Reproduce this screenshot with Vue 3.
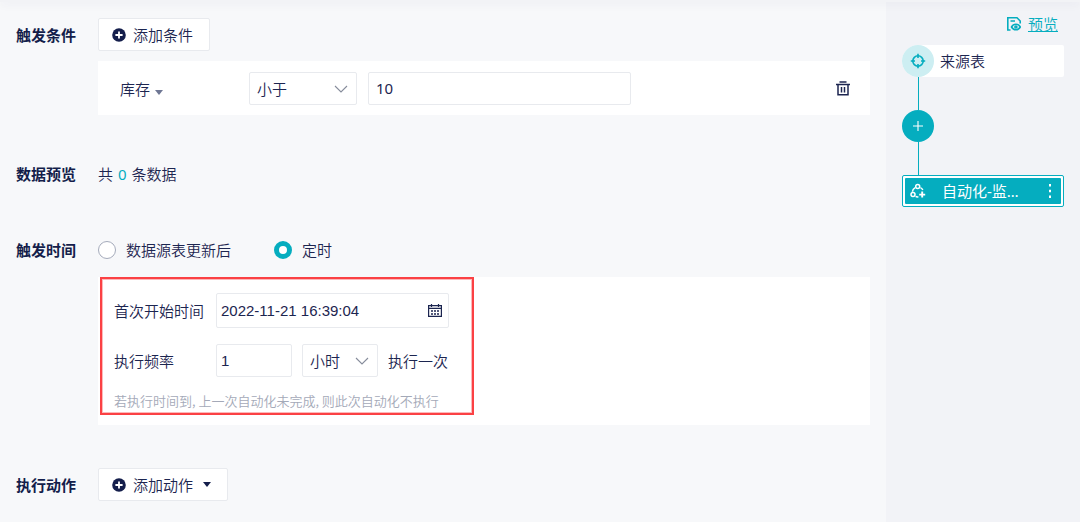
<script setup>
import { ref } from 'vue'

const operator = ref('小于')
const threshold = ref('10')
const trigger = ref('timer')
const startTime = ref('2022-11-21 16:39:04')
const interval = ref('1')
const unit = ref('小时')
</script>

<template>
  <div class="page">
    <div class="top-edge"></div>
    <main class="settings">
      <section class="row conditions">
        <h2 class="title">触发条件</h2>
        <button type="button" class="add">
          <svg width="14" height="14" viewBox="0 0 14 14" aria-hidden="true">
            <circle cx="7" cy="7" r="6.8" fill="#141e4b" />
            <path d="M7 3.4v7.2M3.4 7h7.2" stroke="#fff" stroke-width="1.8" />
          </svg>
          <span>添加条件</span>
        </button>
        <div class="panel filter">
          <button type="button" class="field">
            <span>库存</span>
            <svg width="8" height="5" viewBox="0 0 8 5" aria-hidden="true"><path d="M0 0h8L4 5z" fill="#6f7794" /></svg>
          </button>
          <div class="select operator">
            <select v-model="operator" aria-label="比较方式">
              <option>小于</option>
              <option>大于</option>
            </select>
            <svg width="14" height="8" viewBox="0 0 14 8" aria-hidden="true"><path d="M1 1l6 6 6-6" fill="none" stroke="#868c9b" stroke-width="1.1" /></svg>
          </div>
          <input v-model="threshold" class="box threshold" type="text" aria-label="数值" />
          <button type="button" class="delete" aria-label="删除">
            <svg width="14" height="15" viewBox="0 0 14 15" fill="none" stroke="#1c2550" stroke-width="1.5" aria-hidden="true">
              <path d="M3.5 1h7M0 3.5h14M2 3.5v10.2h10V3.5M5.5 6v5.5M8.5 6v5.5" />
            </svg>
          </button>
        </div>
      </section>

      <section class="row preview">
        <h2 class="title">数据预览</h2>
        <p class="count">共 <span class="accent">0</span> 条数据</p>
      </section>

      <section class="row schedule">
        <h2 class="title">触发时间</h2>
        <div class="radios">
          <label><input v-model="trigger" type="radio" name="trigger" value="update" /><span>数据源表更新后</span></label>
          <label><input v-model="trigger" type="radio" name="trigger" value="timer" /><span>定时</span></label>
        </div>
        <div class="panel timing">
          <div class="highlight">
            <div class="line">
              <label class="name" for="start">首次开始时间</label>
              <div class="date">
                <input id="start" v-model="startTime" class="box" type="text" />
                <svg width="14" height="13" viewBox="0 0 14 13" aria-hidden="true">
                  <path d="M.6 1.6h12.8v10.8H.6zM.6 4.4h12.8M3.5 0v3M10.5 0v3" fill="none" stroke="#1c2550" stroke-width="1.2" />
                  <path d="M3 7h8M3 10h8" stroke="#1c2550" stroke-width="1.5" stroke-dasharray="2 1" />
                </svg>
              </div>
            </div>
            <div class="line">
              <label class="name" for="interval">执行频率</label>
              <input id="interval" v-model="interval" class="box interval" type="text" />
              <div class="select unit">
                <select v-model="unit" aria-label="时间单位">
                  <option>小时</option>
                  <option>天</option>
                </select>
                <svg width="14" height="8" viewBox="0 0 14 8" aria-hidden="true"><path d="M1 1l6 6 6-6" fill="none" stroke="#868c9b" stroke-width="1.1" /></svg>
              </div>
              <span class="once">执行一次</span>
            </div>
            <p class="hint">若执行时间到, 上一次自动化未完成, 则此次自动化不执行</p>
          </div>
        </div>
      </section>

      <section class="row actions">
        <h2 class="title">执行动作</h2>
        <button type="button" class="add">
          <svg width="14" height="14" viewBox="0 0 14 14" aria-hidden="true">
            <circle cx="7" cy="7" r="6.8" fill="#141e4b" />
            <path d="M7 3.4v7.2M3.4 7h7.2" stroke="#fff" stroke-width="1.8" />
          </svg>
          <span>添加动作</span>
          <svg class="caret" width="8" height="5" viewBox="0 0 8 5" aria-hidden="true"><path d="M0 0h8L4 5z" fill="#141e4b" /></svg>
        </button>
      </section>
    </main>

    <aside class="flow">
      <a href="#preview" class="preview-link">
        <svg width="14" height="14" viewBox="0 0 14 14" fill="none" stroke="#05adbf" stroke-width="1.6" aria-hidden="true">
          <path d="M3.5 13H.8V.8H10L13.2 4v2.5M3.5 4H8" />
          <path d="M4.5 10C6.5 6.4 11.3 6.4 13.3 10C11.3 13.6 6.5 13.6 4.5 10z" />
          <circle cx="8.9" cy="10" r="1" />
        </svg>
        <span>预览</span>
      </a>
      <div class="source">
        <span class="node">
          <svg width="16" height="16" viewBox="0 0 16 16" fill="none" stroke="#05adbf" stroke-width="1.6" aria-hidden="true">
            <circle cx="8" cy="8" r="5.2" />
            <path d="M8 .8v4.2M8 11v4.2M.8 8h4.2M11 8h4.2" />
          </svg>
        </span>
        <span>来源表</span>
      </div>
      <div class="wire"></div>
      <button type="button" class="plus" aria-label="添加节点">
        <svg width="10" height="10" viewBox="0 0 10 10" aria-hidden="true"><path d="M5 0v10M0 5h10" stroke="#fff" stroke-width="1.1" /></svg>
      </button>
      <div class="wire"></div>
      <div class="automation">
        <div class="automation-body">
          <svg width="16" height="16" viewBox="0 0 16 16" fill="none" stroke="#fff" stroke-width="1.5" aria-hidden="true">
            <circle cx="7.7" cy="3.6" r="2" />
            <circle cx="3" cy="11.6" r="2" />
            <path d="M5.2 4.6Q2.6 6 2.4 8.8M10.4 4.6Q12.2 5.4 12.8 7M5.6 13.4Q6.8 14.2 8.4 13.8" />
            <path d="M12.2 8.6v6M9.2 11.6h6" stroke-width="1.9" />
          </svg>
          <span class="name">自动化-监…</span>
          <button type="button" class="more" aria-label="更多">
            <svg width="4" height="14" viewBox="0 0 4 14" fill="#fff" aria-hidden="true">
              <path d="M1 0h2v2.4H1zM1 5.8h2v2.4H1zM1 11.6h2V14H1z" />
            </svg>
          </button>
        </div>
      </div>
    </aside>
  </div>
</template>

<style>
body {
  margin: 0;
  background: #f7f8fa;
}
</style>

<style scoped>
* {
  box-sizing: border-box;
}
.page {
  position: relative;
  display: flex;
  min-height: 100vh;
  background: #f7f8fa;
  color: #1c2550;
  font: 350 15px/22px "Noto Sans CJK SC", sans-serif;
}
.top-edge {
  position: absolute;
  top: 0;
  left: 0;
  right: 0;
  height: 2px;
  background: #f2f3f6;
  box-shadow: 0 1px 10px rgba(20, 30, 75, 0.12);
}
.settings {
  flex: 1;
  min-width: 0;
  padding: 18px 16px;
}
.row {
  display: grid;
  grid-template-columns: 82px minmax(0, 1fr);
  align-items: center;
  justify-items: start;
}
.title {
  margin: 0;
  color: #141e4b;
  font-size: 15px;
  font-weight: 700;
}
button {
  margin: 0;
  padding: 0;
  border: 0;
  background: none;
  color: inherit;
  font: inherit;
  cursor: pointer;
}
svg {
  display: block;
  flex: none;
}
p {
  margin: 0;
}
.add {
  display: flex;
  align-items: center;
  gap: 7px;
  height: 33px;
  padding: 0 16px 0 13px;
  border: 1px solid #e8eaee;
  border-radius: 2px;
  background: #fff;
}
.add .caret {
  margin-left: 3px;
}
.panel {
  grid-column: 2;
  justify-self: stretch;
  background: #fff;
}
.filter {
  display: flex;
  align-items: center;
  margin-top: 10px;
  padding: 11px 20px 10px 22px;
}
.field {
  display: flex;
  align-items: center;
  gap: 5px;
  width: 129px;
}
.field svg {
  margin-top: 8px;
}
.box,
select {
  width: 100%;
  height: 33px;
  margin: 0;
  padding: 0 7px;
  border: 1px solid #e8eaee;
  border-radius: 2px;
  outline: 0;
  background: #fff;
  color: inherit;
  font: inherit;
}
.box {
  display: block;
  padding: 0 4px;
  font-family: "Liberation Sans", Arial, sans-serif;
}
select {
  appearance: none;
}
.select,
.date {
  display: grid;
  align-items: center;
}
.select > *,
.date > * {
  grid-area: 1 / 1;
}
.select svg,
.date svg {
  justify-self: end;
  margin-right: 9px;
  pointer-events: none;
}
.date svg {
  margin-right: 7px;
}
.operator {
  width: 108px;
  margin-right: 11px;
}
.threshold {
  width: 263px;
  padding: 0 7px 2px;
  font-family: "Noto Sans", sans-serif;
  font-weight: 400;
}
.delete {
  margin-left: auto;
}
.preview {
  margin-top: 48px;
}
.accent {
  margin: 0 1px;
  color: #05adbf;
  font-weight: 400;
}
.count {
  font-family: "Noto Sans", "Noto Sans CJK SC", sans-serif;
}
.schedule {
  margin-top: 54px;
}
.radios {
  display: flex;
  gap: 43px;
}
.radios label {
  display: flex;
  align-items: center;
  gap: 10px;
}
.radios input {
  appearance: none;
  width: 18px;
  height: 18px;
  margin: 0;
  border: 1px solid #a5abbb;
  border-radius: 50%;
  background: #fff;
}
.radios input:checked {
  border: 5px solid #05adbf;
}
.timing {
  margin-top: 16px;
  padding: 0 2px 10px;
}
.highlight {
  width: 374px;
  padding: 14px 12px 1px;
  border: 2px solid #fb4144;
  box-shadow: inset 0 0 0 1px #fcb9ba;
}
.line {
  display: flex;
  align-items: center;
  margin-bottom: 16px;
}
.line .name {
  width: 102px;
}
.date {
  width: 233px;
}
.date .box {
  height: 35px;
}
.interval {
  width: 76px;
}
.unit {
  width: 76px;
  margin: 0 10px;
}
.hint {
  margin-top: -2px;
  padding-bottom: 1px;
  color: #a4a9b8;
  font-size: 13px;
  line-height: 20px;
}
.actions {
  margin-top: 43px;
}
.flow {
  flex: none;
  width: 194px;
  padding: 13px 16px;
  background: #f2f3f7;
}
.preview-link {
  display: flex;
  align-items: center;
  justify-content: flex-end;
  gap: 7px;
  margin-bottom: 10px;
  padding-right: 6px;
  color: #05adbf;
  text-decoration: none;
}
.preview-link span {
  text-decoration: underline;
}
.source {
  display: flex;
  align-items: center;
  gap: 6px;
  height: 32px;
  border-radius: 16px 2px 2px 16px;
  background: #fff;
}
.node,
.plus {
  display: flex;
  align-items: center;
  justify-content: center;
  width: 32px;
  height: 32px;
  border-radius: 50%;
  background: #cdeef2;
}
.plus {
  background: #05adbf;
}
.wire {
  width: 1px;
  height: 33px;
  margin-left: 16px;
  background: #05adbf;
}
.automation {
  padding: 2px;
  border: 1px solid #05adbf;
  border-radius: 2px;
  background: #fff;
}
.automation-body {
  display: flex;
  align-items: center;
  height: 26px;
  padding: 0 9px 0 5px;
  border-radius: 1px;
  background: #05adbf;
  color: #fff;
}
.automation-body .name {
  margin-left: 16px;
  font-family: "Noto Sans", "Noto Sans CJK SC", sans-serif;
  font-weight: 400;
  white-space: nowrap;
}
.more {
  margin-left: auto;
}
</style>
